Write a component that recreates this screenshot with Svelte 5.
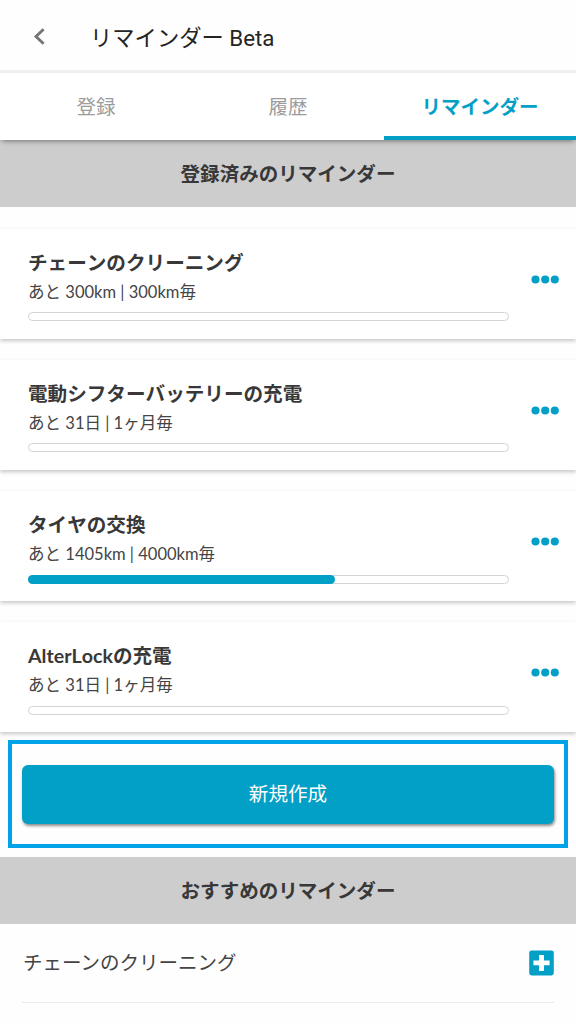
<script>
  const tabs = [
    { label: '登録', active: false },
    { label: '履歴', active: false },
    { label: 'リマインダー', active: true },
  ];

  const reminders = [
    { title: 'チェーンのクリーニング', detail: 'あと 300km | 300km毎', progress: 0 },
    { title: '電動シフターバッテリーの充電', detail: 'あと 31日 | 1ヶ月毎', progress: 0 },
    { title: 'タイヤの交換', detail: 'あと 1405km | 4000km毎', progress: 64 },
    { title: 'AlterLockの充電', detail: 'あと 31日 | 1ヶ月毎', progress: 0 },
  ];

  const suggestions = ['チェーンのクリーニング'];
</script>

<div class="app">
  <header>
    <button class="back" aria-label="戻る">
      <svg width="12" height="18" viewBox="0 0 12 18"><path d="M10.6 1.2 3 8.5l7.6 7.3" /></svg>
    </button>
    <h1>リマインダー Beta</h1>
  </header>

  <nav>
    {#each tabs as tab}
      <button class="tab" class:active={tab.active}>{tab.label}</button>
    {/each}
  </nav>

  <h2>登録済みのリマインダー</h2>

  <div class="cards">
    {#each reminders as item}
      <article>
        <div class="info">
          <h3>{item.title}</h3>
          <p>{item.detail}</p>
          <div class="track">
            {#if item.progress}
              <div class="fill" style="width: {item.progress}%"></div>
            {/if}
          </div>
        </div>
        <button class="more" aria-label="メニュー">
          <svg width="28" height="9" viewBox="0 0 28 9">
            <circle cx="4.5" cy="4.5" r="4.05" />
            <circle cx="14.2" cy="4.5" r="4.05" />
            <circle cx="23.8" cy="4.5" r="4.05" />
          </svg>
        </button>
      </article>
    {/each}
  </div>

  <div class="highlight">
    <button class="create">新規作成</button>
  </div>

  <h2>おすすめのリマインダー</h2>

  <ul>
    {#each suggestions as name}
      <li>
        <span>{name}</span>
        <button class="add" aria-label="追加">
          <svg width="25" height="26" viewBox="0 0 25 26">
            <rect x="0.2" y="0.4" width="24.6" height="25" rx="2.4" />
            <path d="M12.5 4.9v16M4.4 12.9h16.2" />
          </svg>
        </button>
      </li>
    {/each}
  </ul>
</div>

<style>
  :global(body) {
    background: #fff;
    overflow: hidden;
  }
  .app {
    height: 1024px;
    overflow: hidden;
    background: #fefefe;
    color: #383838;
    font-family: Lato, 'Noto Sans CJK JP', sans-serif;
  }
  button {
    border: 0;
    padding: 0;
    margin: 0;
    background: none;
    font: inherit;
    color: inherit;
  }
  h1, h2, h3, p, ul {
    margin: 0;
    padding: 0;
    font-weight: 400;
  }
  svg {
    display: block;
  }
  header {
    box-sizing: border-box;
    height: 73px;
    display: flex;
    align-items: center;
    padding: 3px 0 0 33px;
    border-bottom: 3px solid #f0f0f0;
  }
  .back {
    width: 57px;
  }
  .back path {
    fill: none;
    stroke: #757575;
    stroke-width: 2.9;
  }
  h1 {
    padding-top: 2px;
    font: 22.3px/32px Roboto, 'Noto Sans CJK JP', sans-serif;
    color: #242424;
  }
  nav {
    position: relative;
    display: grid;
    grid-template-columns: repeat(3, 1fr);
    height: 67px;
    background: #fff;
    box-shadow: 0 3px 5px -2px rgba(0, 0, 0, 0.45);
  }
  .tab {
    border-bottom: 4px solid transparent;
    padding-top: 1px;
    font-size: 19.5px;
    color: #9c9c9c;
  }
  .tab.active {
    border-color: #02a0c7;
    color: #02a0c7;
    font-weight: 700;
  }
  h2 {
    height: 67px;
    background: #cdcdcd;
    text-align: center;
    font-size: 19.55px;
    line-height: 67px;
    font-weight: 700;
  }
  .cards {
    display: grid;
    gap: 21.6px;
    padding-top: 22px;
  }
  article {
    box-sizing: border-box;
    height: 109.5px;
    display: flex;
    padding: 17.6px 0 0 28px;
    background: #fff;
    box-shadow: 0 2px 4px rgba(0, 0, 0, 0.22);
  }
  .info {
    width: 481px;
  }
  h3 {
    font-size: 19.6px;
    line-height: 32px;
    font-weight: 700;
    font-kerning: none;
  }
  p {
    font-size: 16.55px;
    line-height: 26px;
    color: #444;
  }
  .track {
    box-sizing: border-box;
    height: 9px;
    margin-top: 7.8px;
    border: 1px solid #d4d4d4;
    border-radius: 5px;
  }
  .fill {
    height: 9px;
    margin: -1px;
    border-radius: 5px;
    background: #02a0c7;
  }
  .more {
    align-self: flex-start;
    margin: 28.6px 0 0 22px;
  }
  .more svg, .add rect {
    fill: #02a0c7;
  }
  .highlight {
    box-sizing: border-box;
    height: 108px;
    margin: 8.3px 8px 8.6px 8px;
    padding: 21px 10px;
    border: 4px solid #00a3e8;
  }
  .create {
    display: block;
    width: 100%;
    height: 58.5px;
    padding-bottom: 3px;
    border-radius: 6px;
    background: #02a0c7;
    color: #fff;
    font-size: 19.6px;
    box-shadow: 1px 2px 3px rgba(0, 0, 0, 0.45);
  }
  ul {
    list-style: none;
    padding: 0 22px;
  }
  li {
    box-sizing: border-box;
    height: 79.5px;
    display: flex;
    align-items: center;
    justify-content: space-between;
    border-bottom: 1px solid #ebebeb;
    font-size: 19.5px;
    color: #444;
  }
  li span {
    padding: 0 0 2px 1px;
  }
  .add path {
    fill: none;
    stroke: #fff;
    stroke-width: 4.9;
  }
</style>
